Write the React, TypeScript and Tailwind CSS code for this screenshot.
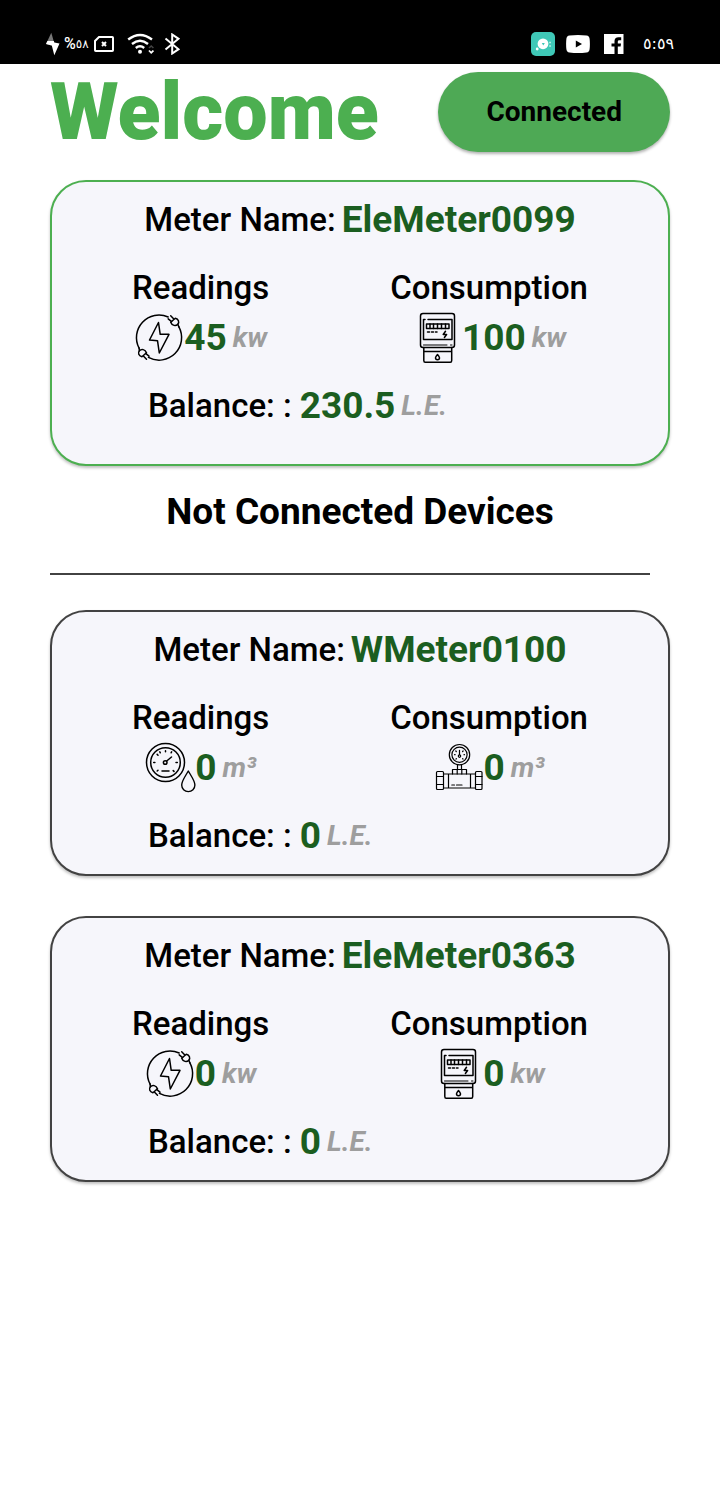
import type { ReactNode } from 'react';

type MeterKind = 'electric' | 'water';

interface Meter {
  name: string;
  kind: MeterKind;
  reading: string;
  consumption: string;
  balance: string;
}

const connectedMeter: Meter = {
  name: 'EleMeter0099',
  kind: 'electric',
  reading: '45',
  consumption: '100',
  balance: '230.5',
};

const otherMeters: Meter[] = [
  { name: 'WMeter0100', kind: 'water', reading: '0', consumption: '0', balance: '0' },
  { name: 'EleMeter0363', kind: 'electric', reading: '0', consumption: '0', balance: '0' },
];

function IconFrame({ children }: { children: ReactNode }) {
  return (
    <svg
      viewBox="0 1 50 50"
      className="size-[50px] shrink-0 overflow-visible"
      fill="none"
      stroke="#000"
      strokeWidth="1.5"
      strokeLinecap="round"
      strokeLinejoin="round"
      aria-hidden="true"
    >
      {children}
    </svg>
  );
}

function EnergyIcon() {
  return (
    <IconFrame>
      <path d="M44.9 14.9A22.5 22.5 0 0 1 14.4 45.4" />
      <path d="M5.1 36.1A22.5 22.5 0 0 1 34.2 5" />
      <path d="M24.5 10.5 15.5 28 23.5 28.7 25.3 41 35 22.3H26.2Z" />
      <path d="M36.7 10.3 41.3 6.2C44.5 7 45.6 10 43.8 12.2C41.8 14.4 38 13.8 36.7 10.3Z" />
      <path d="M36.7 3.8 39.6 6.8M34.2 6.8 37.6 9.6M43.8 12.2 44.9 14.9" />
      <path d="M12.5 40.7 7.9 44.8C4.7 44 3.6 41 5.4 38.8C7.4 36.6 11.2 37.2 12.5 40.7Z" />
      <path d="M12.5 47.2 9.6 44.2M15 44.2 11.6 41.4M5.4 38.8 5.1 36.1" />
    </IconFrame>
  );
}

function ElectricMeterIcon() {
  return (
    <IconFrame>
      <rect x="8.5" y="1.5" width="34" height="34" rx="2.5" />
      <path d="M16 7.5H40V27.5H11.5V7.5H13" />
      <rect x="14.5" y="12" width="22.5" height="4.5" />
      <path d="M18 12V16.5M21.5 12V16.5M25.5 12V16.5M29.5 12V16.5M33.5 12V16.5" />
      <path d="M15.5 20H17.5M19.5 20H21.5M23.5 20H25" />
      <path d="M33.5 19.3 31.2 22.5H34.6L32.4 25.5" />
      <path d="M11.5 33H35M38.5 33H40" strokeWidth="1" />
      <path d="M11.8 35.5V48.5Q11.8 50.3 13.2 50.3H38.3Q39.7 50.3 39.7 48.5V35.5M11.8 39.5H39.7" />
      <path d="M25.5 42.5C24 44.3 23.5 44.9 23.5 45.7A2 2 0 0 0 27.5 45.7C27.5 44.9 27 44.3 25.5 42.5Z" />
    </IconFrame>
  );
}

function WaterReadingIcon() {
  return (
    <IconFrame>
      <circle cx="20.5" cy="20.5" r="19" />
      <circle cx="20.5" cy="20.5" r="14.8" />
      <circle cx="20.2" cy="20.5" r="1.8" />
      <path d="M21.7 19 26.5 15M17 29H24" />
      <path d="M20.5 8.7V9.8M8.7 20.5H9.9M31 20.5H32.3M12.2 12.4 13 13.2M28.2 28.6 29 29.4M12.2 29 13 28.2M14.8 9.9 15.3 10.8M26.6 9.9 26.1 10.8" />
      <path
        d="M43.3 29C40 34.7 36.7 39 36.7 43A6.6 6.6 0 0 0 49.9 43C49.9 39 46.6 34.7 43.3 29Z"
        fill="#f6f6fb"
        strokeWidth="1.4"
      />
    </IconFrame>
  );
}

function WaterPipeIcon() {
  return (
    <IconFrame>
      <g strokeWidth="1.2">
        <circle cx="25.5" cy="12.7" r="10.2" />
        <circle cx="25.5" cy="12.7" r="7.6" />
        <circle cx="25.5" cy="14.1" r="1.2" />
        <path d="M25.5 8.3V12.5M20.6 12.7H21.1M30 12.7H30.5M21.8 9 22.3 9.5M29.1 9 28.6 9.5M22 17 22.4 16.6M29 17 28.6 16.6" />
        <path d="M23.5 23V27.5M27.5 23V27.5" />
        <path d="M18.5 32V27.5H32.5V32M23.2 27.5V32M27.8 27.5V32" />
        <path d="M9.5 32H41.5M9.5 46H41.5M14.5 32V46M36.5 32V46" />
        <rect x="2.5" y="29.5" width="7" height="18" rx="1" />
        <rect x="41.5" y="29.5" width="6.5" height="18" rx="1" />
        <path d="M2.5 34.5H9.5M2.5 42.5H9.5M41.5 34.5H48M41.5 42.5H48" />
        <path d="M17.8 43H20.5M22.5 43H28" />
      </g>
    </IconFrame>
  );
}

function StatusBar() {
  return (
    <header className="flex h-16 items-end justify-between bg-black pr-12 pb-2 pl-[46px] text-white">
      <div className="flex h-6 items-center">
        <svg viewBox="0 0 14 24" className="h-6 w-3.5" aria-hidden="true">
          <path d="M5.3 0.7 0 12 5.5 13.5 8 10.3Z" fill="#777" />
          <path d="M1.4 9H7.8L8.3 10.4 13.5 11.5 8.3 23.2 5.8 13.6 0 12Z" fill="#fff" />
        </svg>
        <div dir="ltr" className="ml-1 flex w-6 items-center font-['Roboto','DejaVu_Sans',sans-serif] text-base leading-6 font-medium">
          <span>%</span>
          <span className="text-xs">٥٨</span>
        </div>
        <svg viewBox="0 0 20 16" className="ml-1.5 h-4 w-5" fill="none" stroke="#fff" strokeWidth="2" aria-hidden="true">
          <path d="M5 1H18.2Q19 1 19 1.8V14.2Q19 15 18.2 15H1.8Q1 15 1 14.2V5Z" />
          <path d="M8 6 12 10M12 6 8 10" />
        </svg>
        <svg viewBox="0 0 27 22" className="ml-[13px] h-[22px] w-[27px]" fill="none" stroke="#fff" strokeWidth="2.4" aria-hidden="true">
          <path d="M1.2 6.5Q13 -2.5 25 6.5M5 11Q13 4.5 21 11M8.8 15Q13 11.5 17.2 15" />
          <circle cx="13" cy="18.8" r="2" fill="#fff" stroke="none" />
          <path d="M22 15 24.2 13 26.4 15" stroke="#444" strokeWidth="1.6" />
          <path d="M22 17.5 24.2 19.8 26.4 17.5" strokeWidth="1.8" />
        </svg>
        <svg viewBox="0 0 16 22" className="ml-2.5 h-[22px] w-4" fill="none" stroke="#fff" strokeWidth="2" aria-hidden="true">
          <path d="M1.5 5.5 14.5 16.2 8.2 20.5V1.5L14.5 5.8 1.5 16.5" />
        </svg>
      </div>
      <div className="flex h-6 items-center">
        <svg viewBox="0 0 24 24" className="size-6" aria-hidden="true">
          <rect width="24" height="24" rx="5" fill="#3fc8b7" />
          <circle cx="12" cy="11.8" r="5.4" fill="#fff" />
          <circle cx="6.2" cy="17" r="1.4" fill="#fff" />
          <path d="M10.8 11H13.8L12.3 13.4Z" fill="#3fc8b7" />
          <path d="M18.3 10.5H19.8M18.3 14H19.8" stroke="#d5f4f0" strokeWidth="1.4" />
        </svg>
        <svg viewBox="0 0 24 18" className="ml-[11px] h-[18px] w-6" aria-hidden="true">
          <path d="M3.5 0.6Q12 -0.4 20.5 0.6Q23.3 0.9 23.6 3.8Q24.2 9 23.6 14.2Q23.3 17.1 20.5 17.4Q12 18.4 3.5 17.4Q0.7 17.1 0.4 14.2Q-0.2 9 0.4 3.8Q0.7 0.9 3.5 0.6Z" fill="#fff" />
          <path d="M9.8 5.5V12.5L16 9Z" fill="#000" />
        </svg>
        <svg viewBox="0 0 20 20" className="ml-3.5 size-5" aria-hidden="true">
          <path d="M0 0H19.5V20H13.8V12.6H16.6L17 9.4H13.8V7.6Q13.8 6.2 15.3 6.2H17.2V3.2H14.6Q10.5 3.2 10.5 7V9.4H7.5V12.6H10.5V20H0Z" fill="#fff" />
        </svg>
        <time dir="ltr" dateTime="05:59" className="ml-[19px] w-[29px] font-['DejaVu_Sans',sans-serif] text-base leading-6">
          ٥:٥٩
        </time>
      </div>
    </header>
  );
}

function Amount({ value, unit }: { value: string; unit: string }) {
  return (
    <span className="flex items-center gap-1.5">
      <span className="text-[37px] leading-[42px] font-bold text-[#1b5e20]">{value}</span>
      <span className="text-[28px] leading-[42px] font-bold text-[#9e9e9e] italic">{unit}</span>
    </span>
  );
}

function Measure({ label, icon, value, unit }: { label: string; icon: ReactNode; value: string; unit: string }) {
  return (
    <div className="flex flex-col items-center gap-1.5">
      <dt className="text-[33px] leading-[38px] font-medium">{label}</dt>
      <dd className="flex h-[50px] items-center">
        {icon}
        <Amount value={value} unit={unit} />
      </dd>
    </div>
  );
}

function MeterCard({ meter, connected = false }: { meter: Meter; connected?: boolean }) {
  const electric = meter.kind === 'electric';
  const unit = electric ? 'kw' : 'm³';
  return (
    <article
      className={
        connected
          ? 'rounded-[36px] border-2 border-[#4caf50] bg-[#f6f6fb] pt-[17px] pb-[37px] shadow-[0_2px_3px_rgba(0,0,0,0.25)]'
          : 'rounded-[36px] border-2 border-[#424242] bg-[#f6f6fb] pt-[17px] pb-[17px] shadow-[0_2px_3px_rgba(0,0,0,0.25)]'
      }
    >
      <h3 className="flex items-center justify-center gap-1.5 text-[33px] leading-[42px] font-medium">
        Meter Name:
        <span className="text-[37px] leading-[42px] font-bold text-[#1b5e20]">{meter.name}</span>
      </h3>
      <dl>
        <div className="mt-7 flex justify-between px-20">
          <Measure label="Readings" icon={electric ? <EnergyIcon /> : <WaterReadingIcon />} value={meter.reading} unit={unit} />
          <Measure label="Consumption" icon={electric ? <ElectricMeterIcon /> : <WaterPipeIcon />} value={meter.consumption} unit={unit} />
        </div>
        <div className="mt-[22px] flex items-center gap-2 pl-24">
          <dt className="text-[33px] leading-[42px] font-medium">Balance: :</dt>
          <dd>
            <Amount value={meter.balance} unit="L.E." />
          </dd>
        </div>
      </dl>
    </article>
  );
}

export default function App() {
  return (
    <div className="min-h-screen bg-white font-['Roboto',sans-serif] text-black">
      <StatusBar />
      <main className="px-[50px] pt-2">
        <div className="flex h-20 items-center justify-between">
          <h1 className="text-[79px] leading-[80px] font-black text-[#4caf50]">Welcome</h1>
          <button
            type="button"
            className="h-20 rounded-full bg-[#4ea955] px-12 text-[28px] font-bold shadow-[0_2px_3px_rgba(0,0,0,0.3)]"
          >
            Connected
          </button>
        </div>
        <section className="mt-7">
          <MeterCard meter={connectedMeter} connected />
        </section>
        <section>
          <h2 className="mt-[25px] text-center text-[37px] leading-[42px] font-bold">Not Connected Devices</h2>
          <hr className="mt-10 mr-5 border-t-2 border-[#424242]" />
          <div className="mt-[35px] flex flex-col gap-10">
            {otherMeters.map((meter) => (
              <MeterCard key={meter.name} meter={meter} />
            ))}
          </div>
        </section>
      </main>
    </div>
  );
}
